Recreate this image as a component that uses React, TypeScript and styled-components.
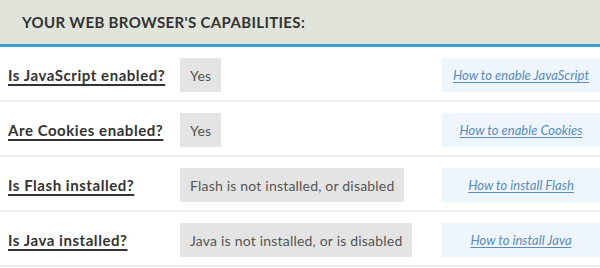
import styled, { createGlobalStyle } from 'styled-components';

const GlobalStyle = createGlobalStyle`
  html, body {
    margin: 0;
    padding: 0;
    background: #ffffff;
  }
  body {
    font-family: Lato, 'Noto Sans', sans-serif;
    color: #333333;
  }
`;

const Panel = styled.section`
  width: 600px;
  height: 268px;
  overflow: hidden;
`;

const Header = styled.h2`
  box-sizing: border-box;
  margin: 0;
  height: 47px;
  padding: 0 0 0 22px;
  display: flex;
  align-items: center;
  background-color: #e1e4da;
  border-bottom: 3px solid #3aa0d2;
  font-size: 15px;
  font-weight: 700;
  letter-spacing: 0.35px;
  text-transform: uppercase;
  color: #333333;
`;

const Row = styled.div`
  box-sizing: border-box;
  display: grid;
  grid-template-columns: 172px 1fr 158px;
  align-items: center;
  height: 55px;
  padding: 11px 0 8px 8px;
  border-bottom: 2px solid #ececec;
`;

const Label = styled.a`
  justify-self: start;
  font-size: 15px;
  font-weight: 700;
  letter-spacing: 0.55px;
  color: #333333;
  text-decoration: underline;
  text-decoration-thickness: 2px;
  text-underline-offset: 3px;
  cursor: pointer;
`;

const Value = styled.div`
  justify-self: start;
  box-sizing: border-box;
  height: 34px;
  display: flex;
  align-items: center;
  padding: 0 10px;
  background-color: #e4e4e4;
  color: #555555;
  font-size: 14px;
  letter-spacing: 0.2px;
`;

const HelpBox = styled.div`
  box-sizing: border-box;
  height: 34px;
  display: flex;
  align-items: center;
  justify-content: center;
  background-color: #eef5fc;
`;

const HelpLink = styled.a`
  font-size: 13px;
  font-style: italic;
  color: #5a8cbf;
  text-decoration: underline;
  text-underline-offset: 2px;
  cursor: pointer;
`;

type Capability = {
  question: string;
  answer: string;
  help: string;
};

const capabilities: Capability[] = [
  { question: 'Is JavaScript enabled?', answer: 'Yes', help: 'How to enable JavaScript' },
  { question: 'Are Cookies enabled?', answer: 'Yes', help: 'How to enable Cookies' },
  { question: 'Is Flash installed?', answer: 'Flash is not installed, or disabled', help: 'How to install Flash' },
  { question: 'Is Java installed?', answer: 'Java is not installed, or is disabled', help: 'How to install Java' },
];

export default function App() {
  return (
    <>
      <GlobalStyle />
      <Panel>
        <Header>Your web browser&apos;s capabilities:</Header>
        {capabilities.map((c) => (
          <Row key={c.question}>
            <Label>{c.question}</Label>
            <Value>{c.answer}</Value>
            <HelpBox>
              <HelpLink>{c.help}</HelpLink>
            </HelpBox>
          </Row>
        ))}
      </Panel>
    </>
  );
}
